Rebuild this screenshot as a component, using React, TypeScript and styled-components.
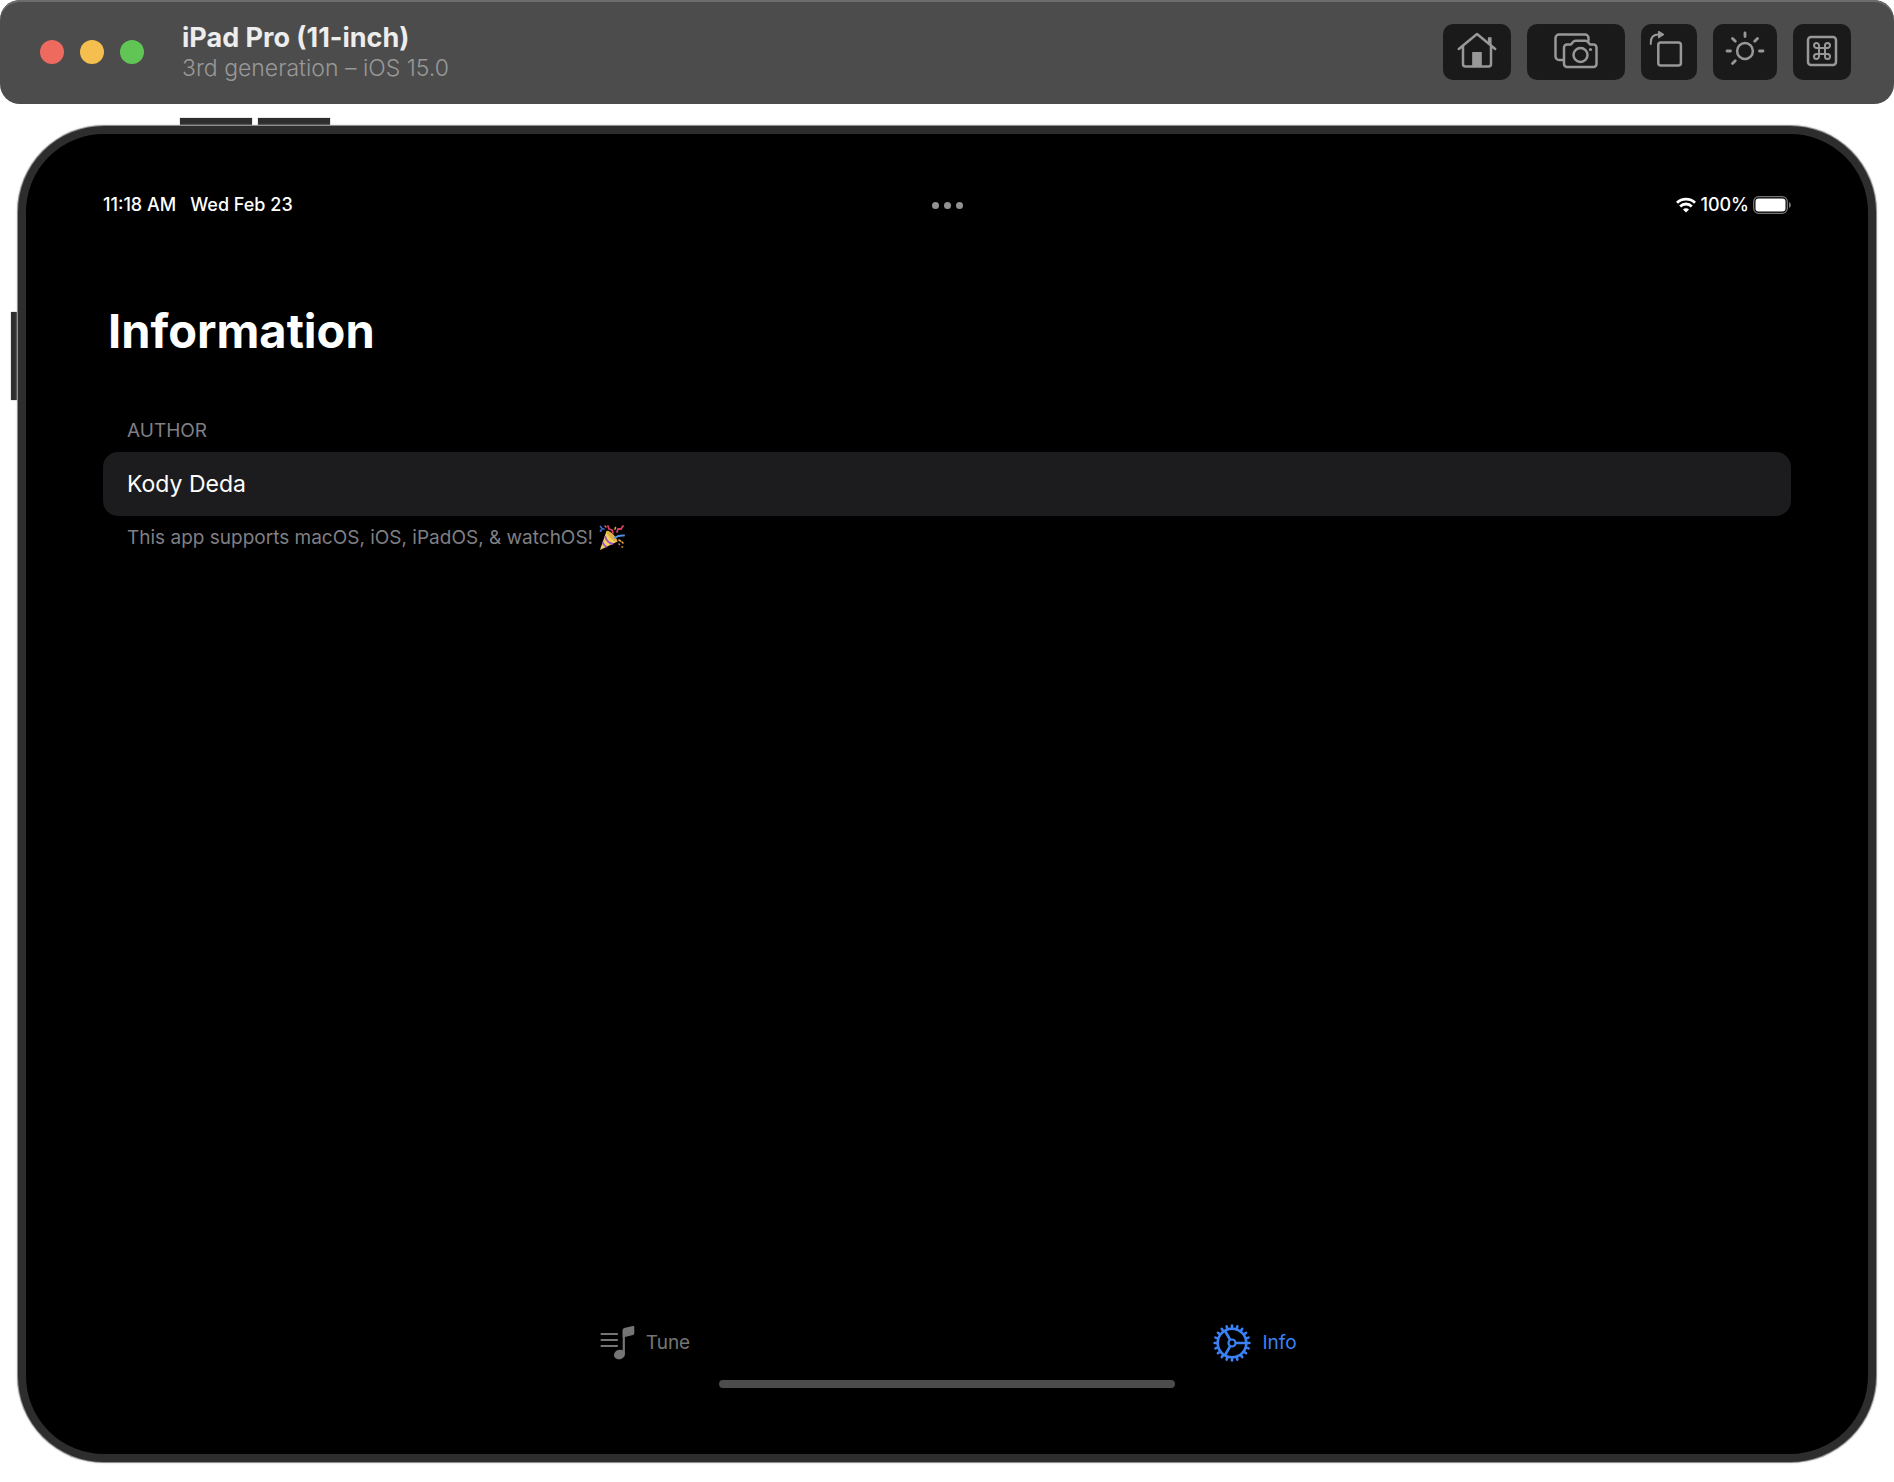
import React from "react";
import styled, { createGlobalStyle } from "styled-components";

const GlobalStyle = createGlobalStyle`
  *, *::before, *::after { box-sizing: border-box; }
  body {
    margin: 0;
    background: #ffffff;
    font-family: Inter, "Liberation Sans", sans-serif;
  }
  h1, h2, p { margin: 0; font-weight: 400; }
  button { font: inherit; border: 0; padding: 0; cursor: pointer; }
`;

const Page = styled.div`
  display: flex;
  flex-direction: column;
  min-height: 100vh;
`;

const TitleBar = styled.header`
  display: flex;
  align-items: center;
  height: 104px;
  padding: 0 43px 0 40px;
  background: #4c4c4c;
  border-radius: 20px;
  box-shadow: inset 0 2px 0 #6c6c6c;
`;

const Lights = styled.div`
  display: flex;
  gap: 16px;
  margin-right: 38px;
`;

const Light = styled.button<{ $color: string }>`
  width: 24px;
  height: 24px;
  border-radius: 50%;
  background: ${(p) => p.$color};
`;

const Titles = styled.div`
  flex: 1;
`;

const DeviceName = styled.h1`
  font-size: 27px;
  line-height: 32px;
  font-weight: 700;
  color: #ededed;
`;

const DeviceDetail = styled.p`
  font-size: 23px;
  line-height: 28px;
  font-weight: 300;
  color: #989898;
`;

const Tools = styled.div`
  display: flex;
  gap: 16px;
`;

const Tool = styled.button<{ $width: number }>`
  display: flex;
  align-items: center;
  justify-content: center;
  width: ${(p) => p.$width}px;
  height: 56px;
  padding-bottom: 2px;
  border-radius: 10px;
  background: #1a1a1a;
  color: #989898;

  svg {
    display: block;
    fill: none;
    stroke: currentColor;
    stroke-width: 2.5;
    stroke-linecap: round;
    stroke-linejoin: round;
  }
`;

const Device = styled.div`
  position: relative;
  display: flex;
  flex: 1;
  margin: 22px 18px 20px;
`;

const SideKey = styled.span<{ $side: "top" | "left"; $at: number; $length: number }>`
  position: absolute;
  background: #2d2d2d;
  box-shadow: 0 0 1px #777777;
  ${(p) =>
    p.$side === "top"
      ? `top: -8px; left: ${p.$at}px; width: ${p.$length}px; height: 9px;`
      : `left: -7px; top: ${p.$at}px; height: ${p.$length}px; width: 9px;`}
`;

const Screen = styled.main`
  position: relative;
  display: flex;
  flex: 1;
  flex-direction: column;
  padding: 59px 77px 66px;
  background: #000000;
  border: 8px solid #2d2d2d;
  border-radius: 86px;
  box-shadow: 0 0 0 1px #8e8e8e, 0 0 2px 1px #c4c4c4;
`;

const StatusBar = styled.div`
  display: grid;
  grid-template-columns: 1fr auto 1fr;
  align-items: center;
  height: 24px;
  font-size: 18px;
  line-height: 24px;
  font-weight: 500;
  color: #ffffff;
`;

const Clock = styled.div`
  display: flex;
  gap: 14px;
`;

const Multitask = styled.button`
  display: flex;
  gap: 5px;
  background: transparent;
`;

const Dot = styled.span`
  width: 7px;
  height: 7px;
  border-radius: 50%;
  background: #929292;
`;

const Power = styled.div`
  display: flex;
  align-items: center;
  justify-content: flex-end;
  gap: 4px;

  svg { display: block; }
`;

const Heading = styled.h2`
  margin-top: 84px;
  padding-left: 5px;
  font-size: 47px;
  line-height: 60px;
  font-weight: 700;
  color: #ffffff;
`;

const Section = styled.section`
  margin-top: 58px;
`;

const Caption = styled.p`
  display: flex;
  align-items: center;
  gap: 6px;
  padding: 0 24px;
  font-size: 19px;
  line-height: 24px;
  color: #7f7f84;
`;

const Card = styled.div`
  margin: 9px 0;
  padding: 17px 24px;
  font-size: 23px;
  line-height: 30px;
  color: #ffffff;
  background: #1c1c1e;
  border-radius: 15px;
`;

const TabBar = styled.nav`
  display: grid;
  grid-template-columns: 1fr 1fr;
  width: 100%;
  max-width: 1220px;
  margin: auto auto 0;
`;

const Tab = styled.button<{ $active?: boolean }>`
  display: flex;
  align-items: center;
  justify-content: center;
  gap: 11px;
  height: 40px;
  padding-left: 6px;
  font-size: 19px;
  line-height: 24px;
  background: transparent;
  color: ${(p) => (p.$active ? "#3b82f6" : "#757575")};

  svg { display: block; }
`;

const HomeIndicator = styled.div`
  width: 27%;
  height: 8px;
  margin: 17px auto 0;
  border-radius: 4px;
  background: #4c4c4c;
`;

const HomeIcon = () => (
  <svg width="40" height="38" viewBox="0 1 40 38">
    <path d="M1.800 18 20 3l18.200 15M6 15.500v17.500a2.500 2.500 0 0 0 2.500 2.500h23a2.500 2.500 0 0 0 2.500-2.500V15.500" />
    <path d="M15.800 21.500h8.400v13.500h-8.400zM31.500 6.800h2.500v7.500l-2.500-2z" fill="currentColor" strokeWidth="1.200" />
  </svg>
);

const CameraIcon = () => (
  <svg width="44" height="38" viewBox="0 0 44 38">
    <path d="M9 28H5a3.500 3.500 0 0 1-3.500-3.500V6A3.500 3.500 0 0 1 5 2.500h26A3.500 3.500 0 0 1 34.500 6v2.500" />
    <path d="M13 12.500h4l2-2.500q1-1.300 2.700-1.300h9.600q1.700 0 2.700 1.300l2 2.500h3.500a3 3 0 0 1 3 3V32a3 3 0 0 1-3 3H13a3 3 0 0 1-3-3V15.500a3 3 0 0 1 3-3z" />
    <circle cx="26.500" cy="23" r="7" />
    <circle cx="36.500" cy="17.500" r="1.600" fill="currentColor" stroke="none" />
  </svg>
);

const RotateIcon = () => (
  <svg width="40" height="40" viewBox="0 0 40 40">
    <rect x="9.300" y="11.500" width="22.600" height="23" rx="2.500" />
    <path d="M1.800 13v-1.500Q1.800 3.500 9.500 3.500" strokeWidth="2" />
    <path d="M9.800 0.300 15 3.500l-5.200 3.300z" fill="currentColor" strokeWidth="1" />
  </svg>
);

const BrightnessIcon = () => (
  <svg width="40" height="40" viewBox="0 0 40 40">
    <circle cx="20" cy="20" r="7.900" />
    <path d="M20 2v3.500M32.500 7.500l-2.800 2.800M7.500 7.500l2.800 2.800M2 20h3.500M34.500 20h3.500M7.500 32.500l2.800-2.800" strokeWidth="2.800" />
  </svg>
);

const CommandIcon = () => (
  <svg width="32" height="32" viewBox="0 0 32 32">
    <rect x="2" y="2" width="28" height="28" rx="3" />
    <path
      d="M13 10.500v11a2.500 2.500 0 1 1-2.500-2.500h11a2.500 2.500 0 1 1-2.500 2.500v-11a2.500 2.500 0 1 1 2.500 2.500h-11a2.500 2.500 0 1 1 2.500-2.500z"
      strokeWidth="2"
    />
  </svg>
);

const WifiIcon = () => (
  <svg width="20" height="16" viewBox="0 0 20 16" fill="none" stroke="#ffffff" strokeWidth="2.800">
    <path d="M1 5.800a12.700 12.700 0 0 1 18 0M4.200 9.400a8.200 8.200 0 0 1 11.600 0" />
    <path d="M10 15.500 7 12.400a4.200 4.200 0 0 1 6 0z" fill="#ffffff" stroke="none" />
  </svg>
);

const BatteryIcon = () => (
  <svg width="38" height="18" viewBox="0 0 38 18">
    <rect x="0.700" y="0.700" width="33.600" height="16.600" rx="5" fill="none" stroke="#757575" strokeWidth="1.300" />
    <rect x="2.500" y="2.500" width="30" height="13" rx="3" fill="#ffffff" />
    <path d="M36 6q2 .8 2 3t-2 3z" fill="#757575" />
  </svg>
);

const PartyIcon = () => (
  <svg width="26" height="26" viewBox="0 0 26 26" role="img" aria-label="Party popper">
    <path d="M1 25 7.500 6q8 2 11 10.500z" fill="#f3cf5e" />
    <path d="M7.500 6q2-1 6 3t5 7.500q-3 .5-7-3.500T7.500 6z" fill="#e3ac42" />
    <path d="M6 11q2 7 8 8M3.500 17q1.500 4 4.500 5" fill="none" stroke="#9a4fc4" strokeWidth="1.800" />
    <path d="M16 12.500q4-2.500 9-2" fill="none" stroke="#4c8fe0" strokeWidth="2" strokeLinecap="round" />
    <path d="M1.500 1.500l1.500 2 2 .5M1.500 6l1-1" fill="none" stroke="#3a68c8" strokeWidth="1.800" strokeLinecap="round" />
    <path d="M9 1l1 3 3 1 1 3M18 7l1-3 3 0 2-3" fill="none" stroke="#d0405f" strokeWidth="1.800" strokeLinecap="round" />
    <path d="M20 15l1.500 1M16 4l.5-1.500M23 22l.5 0M23 17l1 1" stroke="#e0a83c" strokeWidth="1.600" strokeLinecap="round" />
    <path d="M6 1l1 1M20 19l.5.5" stroke="#e0607e" strokeWidth="1.600" strokeLinecap="round" />
  </svg>
);

const TuneIcon = () => (
  <svg width="35" height="36" viewBox="0 0 35 36" fill="none" stroke="currentColor">
    <path d="M1.500 9h15.500M1.500 15h15.500M1.500 21h15.500" strokeWidth="2.200" strokeLinecap="round" />
    <path d="M23.800 29.500V5" strokeWidth="2.200" />
    <path
      d="M22.700 5q0-1.500 1.500-2l8.500-2q1.600-.4 1.600 1V8.300q0 1.300-1.200 1.700l-10.400 2.500z"
      fill="currentColor"
      stroke="none"
    />
    <ellipse cx="19.500" cy="29.500" rx="5.600" ry="4.700" transform="rotate(-20 19.500 29.500)" fill="currentColor" stroke="none" />
  </svg>
);

const teeth = Array.from({ length: 20 }, (_, i) => i * 18);

const GearIcon = () => (
  <svg width="38" height="38" viewBox="-19 -19 38 38" fill="none" stroke="currentColor" strokeWidth="2.600">
    <circle r="14.300" />
    <circle r="3.500" strokeWidth="2.200" />
    <path d="M4 0h10M-2 -3.500-7.200 -12.500M-2 3.500-7.200 12.500" />
    {teeth.map((angle) => (
      <path key={angle} d="M15 0h2.400" transform={`rotate(${angle})`} strokeLinecap="round" />
    ))}
  </svg>
);

export default function App() {
  return (
    <Page>
      <GlobalStyle />
      <TitleBar>
        <Lights>
          <Light $color="#ee6a5f" aria-label="Close" />
          <Light $color="#f5bf4f" aria-label="Minimize" />
          <Light $color="#61c555" aria-label="Zoom" />
        </Lights>
        <Titles>
          <DeviceName>iPad Pro (11-inch)</DeviceName>
          <DeviceDetail>3rd generation – iOS 15.0</DeviceDetail>
        </Titles>
        <Tools>
          <Tool $width={68} aria-label="Home"><HomeIcon /></Tool>
          <Tool $width={98} aria-label="Screenshot"><CameraIcon /></Tool>
          <Tool $width={56} aria-label="Rotate"><RotateIcon /></Tool>
          <Tool $width={64} aria-label="Appearance"><BrightnessIcon /></Tool>
          <Tool $width={58} aria-label="Keyboard"><CommandIcon /></Tool>
        </Tools>
      </TitleBar>
      <Device>
        <SideKey $side="top" $at={162} $length={72} />
        <SideKey $side="top" $at={240} $length={72} />
        <SideKey $side="left" $at={186} $length={88} />
        <Screen>
          <StatusBar>
            <Clock>
              <span>11:18 AM</span>
              <span>Wed Feb 23</span>
            </Clock>
            <Multitask aria-label="Multitasking">
              <Dot />
              <Dot />
              <Dot />
            </Multitask>
            <Power>
              <WifiIcon />
              <span>100%</span>
              <BatteryIcon />
            </Power>
          </StatusBar>
          <Heading>Information</Heading>
          <Section>
            <Caption>AUTHOR</Caption>
            <Card>Kody Deda</Card>
            <Caption>
              This app supports macOS, iOS, iPadOS, &amp; watchOS!
              <PartyIcon />
            </Caption>
          </Section>
          <TabBar>
            <Tab><TuneIcon />Tune</Tab>
            <Tab $active aria-current="page"><GearIcon />Info</Tab>
          </TabBar>
          <HomeIndicator />
        </Screen>
      </Device>
    </Page>
  );
}
